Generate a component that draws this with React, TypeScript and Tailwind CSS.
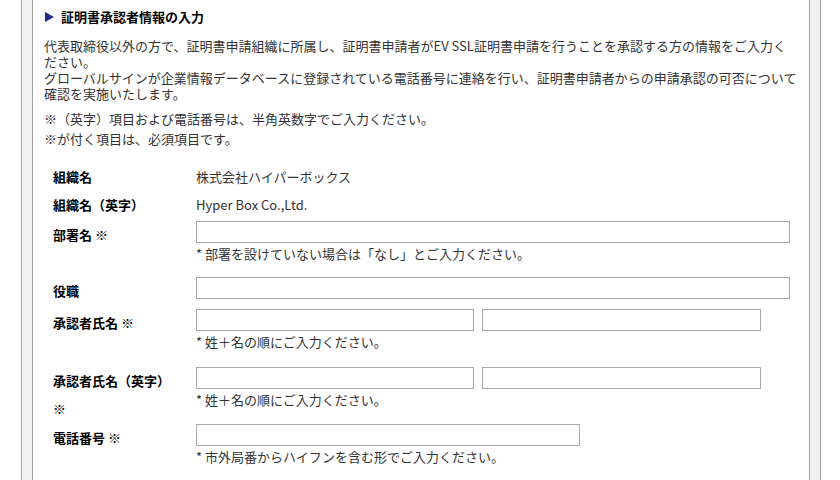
import React from 'react';

const font = { fontFamily: '"Noto Sans CJK JP", "Noto Sans", sans-serif' };

const Req = () => <span className="font-normal">※</span>;

const TextInput = ({ width }: { width: string }) => (
    <input type="text" className={`${width} h-[22px] border border-[#a9a9a9] bg-white px-1 text-[13px] outline-none`} />
);

const Note = ({ children }: { children: React.ReactNode }) => (
    <p className="mt-[3px] text-[13px] leading-[16px] text-[#333] whitespace-nowrap">{children}</p>
);

export default function App() {
    return (
        <div className="w-[840px] h-[480px] overflow-hidden bg-white pl-[21px]" style={font}>
            {/* outer frame */}
            <div className="w-[800px] h-[480px] border-x border-[#a0a0a0] bg-[#f2f2f2] px-[10px]">
                <div className="h-full border-x border-[#a0a0a0] bg-white pl-[11px] pr-2 text-[13px] text-[#333]">
                    {/* Heading */}
                    <h2 className="pt-[9px] flex items-center gap-[7px] font-bold leading-[16px] text-black">
                        <svg width="9" height="10" viewBox="0 0 9 10" className="ml-[1px]">
                            <polygon points="0,0 9,5 0,10" fill="#1f2d8a" />
                        </svg>
                        証明書承認者情報の入力
                    </h2>

                    {/* Description */}
                    <p className="mt-[13px] leading-[16px] whitespace-nowrap">
                        代表取締役以外の方で、証明書申請組織に所属し、証明書申請者がEV SSL証明書申請を行うことを承認する方の情報をご入力く
                        <br />
                        ださい。
                        <br />
                        グローバルサインが企業情報データベースに登録されている電話番号に連絡を行い、証明書申請者からの申請承認の可否について
                        <br />
                        確認を実施いたします。
                    </p>
                    <p className="mt-[9px] leading-[16px]">※（英字）項目および電話番号は、半角英数字でご入力ください。</p>
                    <p className="mt-[4px] leading-[16px]">※が付く項目は、必須項目です。</p>

                    {/* Form */}
                    <div className="mt-[16px] pl-[9px] flex flex-col">
                        <div className="flex leading-[28px]">
                            <div className="w-[143px] font-bold text-black">組織名</div>
                            <div>株式会社ハイパーボックス</div>
                        </div>
                        <div className="flex leading-[28px]">
                            <div className="w-[143px] font-bold text-black">組織名（英字）</div>
                            <div>Hyper Box Co.,Ltd.</div>
                        </div>

                        <div className="mt-[2px] flex">
                            <div className="w-[143px] leading-[28px] font-bold text-black">部署名 <Req /></div>
                            <div>
                                <TextInput width="w-[594px]" />
                                <Note>* 部署を設けていない場合は「なし」とご入力ください。</Note>
                            </div>
                        </div>

                        <div className="mt-[15px] flex">
                            <div className="w-[143px] leading-[28px] font-bold text-black">役職</div>
                            <div>
                                <TextInput width="w-[594px]" />
                            </div>
                        </div>

                        <div className="mt-[4px] flex">
                            <div className="w-[143px] leading-[28px] font-bold text-black">承認者氏名 <Req /></div>
                            <div>
                                <div className="flex gap-[8px]">
                                    <TextInput width="w-[278px]" />
                                    <TextInput width="w-[279px]" />
                                </div>
                                <Note>* 姓＋名の順にご入力ください。</Note>
                            </div>
                        </div>

                        <div className="mt-[17px] flex">
                            <div className="w-[143px] leading-[28px] font-bold text-black">
                                承認者氏名（英字）
                                <br />
                                <Req />
                            </div>
                            <div>
                                <div className="flex gap-[8px]">
                                    <TextInput width="w-[278px]" />
                                    <TextInput width="w-[279px]" />
                                </div>
                                <Note>* 姓＋名の順にご入力ください。</Note>
                            </div>
                        </div>

                        <div className="mt-[1px] flex">
                            <div className="w-[143px] leading-[28px] font-bold text-black">電話番号 <Req /></div>
                            <div>
                                <TextInput width="w-[384px]" />
                                <Note>* 市外局番からハイフンを含む形でご入力ください。</Note>
                            </div>
                        </div>
                    </div>
                </div>
            </div>
        </div>
    );
}
